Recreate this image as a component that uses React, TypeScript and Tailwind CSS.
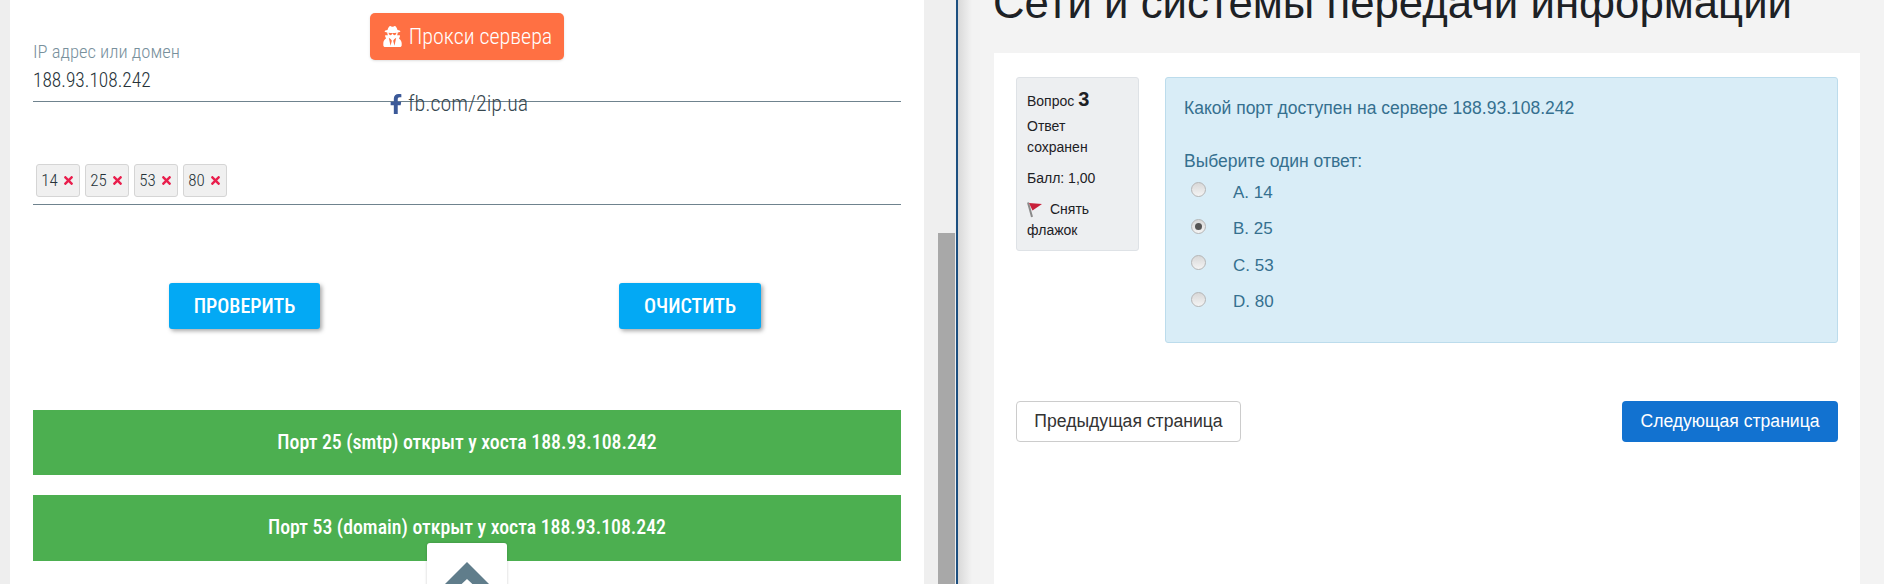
import { FaFacebookF, FaTimes, FaUserSecret } from "react-icons/fa";

const cond = "font-['Roboto_Condensed','Liberation_Sans_Narrow',Roboto,sans-serif]";

const ports = ["14", "25", "53", "80"];

const answers = [
  { label: "A. 14", checked: false },
  { label: "B. 25", checked: true },
  { label: "C. 53", checked: false },
  { label: "D. 80", checked: false },
];

function Radio({ checked }: { checked: boolean }) {
  return (
    <span className="-mt-[5px] flex h-[15px] w-[15px] items-center justify-center rounded-full border border-[#b5b5b5] bg-gradient-to-b from-[#d8d8d8] to-[#f4f4f4]">
      {checked && <span className="h-[7px] w-[7px] rounded-full bg-[#555]" />}
    </span>
  );
}

function Flag() {
  return (
    <svg width="16" height="17" viewBox="0 0 16 17" className="mr-[7px] inline-block align-[-4px]">
      <path d="M1 1.5 L5 16" stroke="#8a8a8a" strokeWidth="2" fill="none" />
      <path d="M2 2 L15 3 L5.5 9.5 Z" fill="#c8203a" />
    </svg>
  );
}

function LeftPanel() {
  return (
    <div className={`relative h-full w-[914px] shrink-0 bg-white px-[23px] pt-[42px] ${cond}`}>
      <div className="absolute left-[360px] top-[13px] flex h-[47px] w-[194px] items-center justify-center gap-[6px] rounded-[5px] bg-[#ff7043] text-[22px] font-light text-white shadow-sm">
        <FaUserSecret className="text-[21px]" />
        <span>Прокси сервера</span>
      </div>
      <div className="absolute left-[376px] top-[91px] flex items-center gap-[2px] text-[22px] font-light leading-[26px] text-[#37474f]">
        <FaFacebookF className="text-[20px] text-[#3b5998]" />
        <span>fb.com/2ip.ua</span>
      </div>

      <div className="flex h-[60px] flex-col border-b border-[#6f838e]">
        <span className="text-[18.6px] font-light leading-[20px] text-[#78909c]">IP адрес или домен</span>
        <span className="mt-[4px] text-[19.4px] font-light leading-[30px] text-[#263238]">188.93.108.242</span>
      </div>

      <div className="mt-[62px] flex h-[41px] items-start gap-[5px] border-b border-[#6f838e] pl-[3px]">
        {ports.map((p) => (
          <span
            key={p}
            className="flex h-[33px] w-[44px] items-center justify-center gap-[4px] rounded-[3px] border border-[#d5d5d5] bg-[#f0f0f0] text-[17px] font-light text-[#263238]"
          >
            {p}
            <FaTimes className="text-[13px] text-[#e91e4c]" />
          </span>
        ))}
      </div>

      <div className="mt-[78px] flex h-[46px] text-[20px] font-medium text-white">
        <button className="ml-[136px] h-full w-[151px] rounded-[3px] bg-[#03a9f4] shadow-[2px_2px_4px_rgba(0,0,0,0.35)]">
          ПРОВЕРИТЬ
        </button>
        <button className="ml-[299px] h-full w-[142px] rounded-[3px] bg-[#03a9f4] shadow-[2px_2px_4px_rgba(0,0,0,0.35)]">
          ОЧИСТИТЬ
        </button>
      </div>

      <div className="mt-[81px] flex h-[65px] items-center justify-center bg-[#4caf50] text-[19.8px] font-medium text-white">
        Порт 25 (smtp) открыт у хоста 188.93.108.242
      </div>
      <div className="mt-[20px] flex h-[66px] items-center justify-center bg-[#4caf50] text-[19.8px] font-medium text-white">
        Порт 53 (domain) открыт у хоста 188.93.108.242
      </div>

      <div className="absolute left-[417px] top-[543px] h-[60px] w-[80px] rounded-t-[3px] bg-white shadow-[0_0_3px_rgba(0,0,0,0.2)]">
        <svg width="44" height="30" viewBox="0 0 44 30" className="mx-auto mt-[19px]">
          <path d="M22 0 L44 22 L44 30 L36 30 L22 17 L8 30 L0 30 L0 22 Z" fill="#607d8b" />
        </svg>
      </div>
    </div>
  );
}

function Scrollbar() {
  return (
    <div className="flex h-full w-[32px] shrink-0 bg-[#efefef] pl-[14px]">
      <div className="mt-[233px] h-[351px] w-[17px] bg-[#a8a8a8]" />
    </div>
  );
}

function RightPanel() {
  return (
    <div className="h-full flex-1 overflow-hidden border-l-2 border-[#1c4f80] bg-[#f3f3f3] font-['Liberation_Sans',Arial,sans-serif]">
      <div className="flex h-full flex-col bg-gradient-to-r from-[#d9d9d9] to-[#f3f3f3] bg-[length:14px_100%] bg-no-repeat pl-[36px] pr-[24px]">
        <h1 className="-ml-[1px] -mt-[27px] h-[80px] shrink-0 whitespace-nowrap text-[43.75px] font-normal leading-[60px] text-[#1d2125]">
          Сети и системы передачи информации
        </h1>
        <div className="h-[531px] shrink-0 bg-white pl-[22px] pr-[22px] pt-[24px]">
          <div className="flex h-[266px] gap-[26px]">
            <div className="h-[174px] w-[123px] rounded-[3px] border border-[#dee2e6] bg-[#edeff1] px-[10px] pt-[11px] text-[14px] leading-[21px] text-[#1d2125]">
              <div className="h-[21px]">
                Вопрос <span className="text-[20px] font-bold leading-none">3</span>
              </div>
              <div className="mt-[6px]">
                Ответ
                <br />
                сохранен
              </div>
              <div className="mt-[10px]">Балл: 1,00</div>
              <div className="mt-[10px]">
                <Flag />
                Снять
                <br />
                флажок
              </div>
            </div>
            <div className="flex-1 rounded-[3px] border border-[#bcdcec] bg-[#d9edf7] px-[18px] pt-[18px] text-[17.5px] text-[#35708f]">
              <p className="leading-[24px]">Какой порт доступен на сервере 188.93.108.242</p>
              <p className="mt-[29px] leading-[24px]">Выберите один ответ:</p>
              <div className="mt-[1px] flex flex-col pl-[7px]">
                {answers.map((a) => (
                  <div key={a.label} className="flex h-[36.5px] items-center gap-[27px]">
                    <Radio checked={a.checked} />
                    <span className="text-[17px]">{a.label}</span>
                  </div>
                ))}
              </div>
            </div>
          </div>
          <div className="mt-[58px] flex justify-between">
            <button className="h-[41px] w-[225px] rounded-[4px] border border-[#ccc] bg-white text-[17.6px] text-[#333]">
              Предыдущая страница
            </button>
            <button className="h-[41px] w-[216px] rounded-[4px] bg-[#1272d0] text-[17.6px] text-white">
              Следующая страница
            </button>
          </div>
        </div>
      </div>
    </div>
  );
}

export default function App() {
  return (
    <div className="flex h-[584px] w-[1884px] overflow-hidden bg-white">
      <div className="h-full w-[10px] shrink-0 bg-[#eeeeee]" />
      <LeftPanel />
      <Scrollbar />
      <RightPanel />
    </div>
  );
}
